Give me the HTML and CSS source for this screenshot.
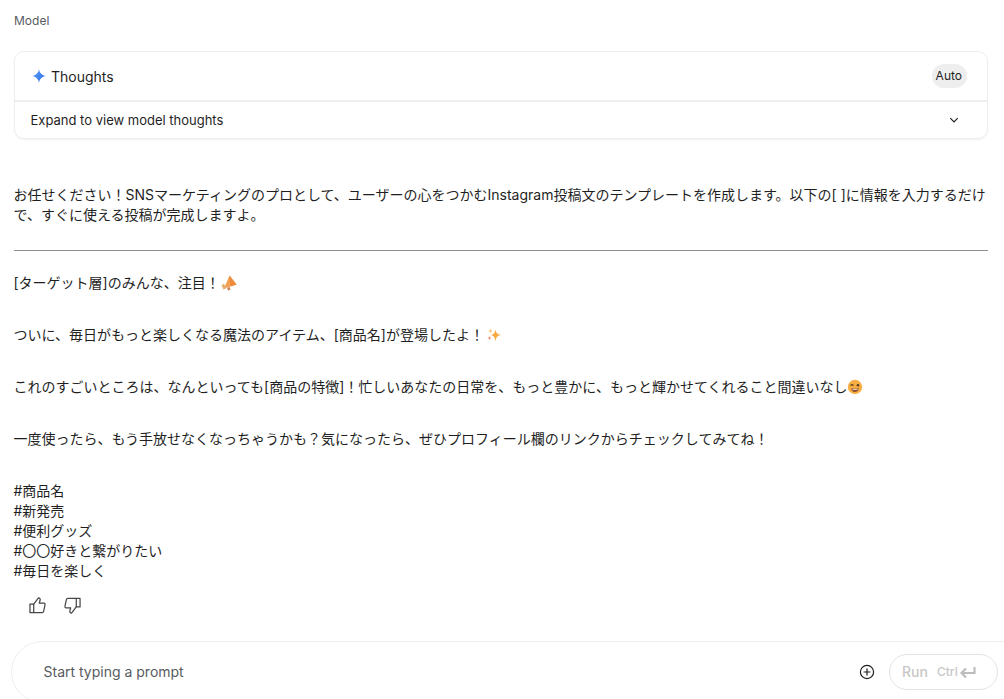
FILE: index.html
```html
<!DOCTYPE html>
<html lang="en">
<head>
  <meta charset="UTF-8" />
  <meta name="viewport" content="width=device-width, initial-scale=1" />
  <title>Model response</title>
  <link rel="stylesheet" href="styles.css">
</head>
<body>

  <div class="chat">
    <div class="role">Model</div>

    <div class="thoughts">
      <div class="thoughts-head">
        <div class="thoughts-title">
          <svg class="spark" width="16" height="16" viewBox="0 0 16 16">
            <defs>
              <linearGradient id="sparkFill" x1="0" y1="0" x2="1" y2="1">
                <stop offset="0" stop-color="#5b9bfa" />
                <stop offset="1" stop-color="#2f6fe8" />
              </linearGradient>
            </defs>
            <path d="M8 1C8.5 5 11 7.5 15 8C11 8.5 8.5 11 8 15C7.5 11 5 8.5 1 8C5 7.5 7.5 5 8 1Z" fill="url(#sparkFill)" />
          </svg>
          <span class="thoughts-label">Thoughts</span>
        </div>
        <span class="auto-chip">Auto</span>
      </div>
      <div class="thoughts-row">
        <span>Expand to view model thoughts</span>
        <svg width="12" height="12" viewBox="0 0 12 12" fill="none" stroke="#1f1f1f" stroke-width="1.2">
          <path d="M2.3 4.2L6 7.9L9.7 4.2" />
        </svg>
      </div>
    </div>

    <div class="message">
      <p>お任せください！SNSマーケティングのプロとして、ユーザーの心をつかむInstagram投稿文のテンプレートを作成します。以下の[ ]に情報を入力するだけで、すぐに使える投稿が完成しますよ。</p>
      <hr class="divider" />
      <p>[ターゲット層]のみんな、注目！<svg class="emoji emoji-horn" width="16" height="16" viewBox="0 0 16 16">
          <path d="M8.5 0.5L15.5 9.5L3 13.5Z" fill="#f0a050" />
          <path d="M8.5 0.5L15.5 9.5L9.5 11.5Z" fill="#ee8a3c" />
          <path d="M0.5 10.5L2.5 14.5L5 13.5L3 8.5Z" fill="#e2b070" />
          <path d="M6 12.8L8.8 12L9.5 14.8L7 15.5Z" fill="#c9875a" />
        </svg></p>
      <p>ついに、毎日がもっと楽しくなる魔法のアイテム、[商品名]が登場したよ！<svg class="emoji emoji-sparkle" width="16" height="16" viewBox="0 0 16 16">
          <path d="M9.5 2.5C10 6 11.5 7.5 15.5 8C11.5 8.5 10 10 9.5 14.5C9 10 7.5 8.5 4.5 8C7.5 7.5 9 6 9.5 2.5Z" fill="#f9a83c" />
          <path d="M4.5 1C4.7 3 5.3 3.6 7 4C5.3 4.4 4.7 5 4.5 6.8C4.3 5 3.7 4.4 2 4C3.7 3.6 4.3 3 4.5 1Z" fill="#fcc77a" />
          <path d="M3.5 8.5C3.7 10.3 4.3 10.8 6 11C4.3 11.3 3.7 11.8 3.5 13.6C3.3 11.8 2.7 11.3 1 11C2.7 10.8 3.3 10.3 3.5 8.5Z" fill="#f59a78" />
        </svg></p>
      <p>これのすごいところは、なんといっても[商品の特徴]！忙しいあなたの日常を、もっと豊かに、もっと輝かせてくれること間違いなし<svg class="emoji" width="16" height="16" viewBox="0 0 16 16">
          <circle cx="8" cy="8" r="7.2" fill="#f8ae42" />
          <path d="M3.5 6.5Q5 5 6.5 6.5" fill="none" stroke="#6b4a2b" stroke-width="1.2" />
          <circle cx="11" cy="6.3" r="1.3" fill="#5a3d24" />
          <path d="M4 9.3Q8 10.2 12 9.3Q11 13 8 13Q5 13 4 9.3Z" fill="#8a4b2a" />
          <path d="M5.2 9.8Q8 10.4 10.8 9.8L10.5 10.6Q8 11 5.5 10.6Z" fill="#fff" />
        </svg></p>
      <p>一度使ったら、もう手放せなくなっちゃうかも？気になったら、ぜひプロフィール欄のリンクからチェックしてみてね！</p>
      <p>#商品名<br>#新発売<br>#便利グッズ<br>#〇〇好きと繋がりたい<br>#毎日を楽しく</p>
    </div>

    <div class="feedback">
      <svg width="17" height="17" viewBox="0 0 18 18" fill="none" stroke="#444746" stroke-width="1.3" stroke-linejoin="round">
        <path d="M1 7.5H5V16.5H1Z" />
        <path d="M5 7.5L10 1C11.5 1 12.2 2 11.8 3.2L10.9 6.5H15.8C16.7 6.5 17.2 7.2 17 8L15.5 15.2C15.3 16 14.8 16.5 14 16.5H5" />
      </svg>
      <svg width="17" height="17" viewBox="0 0 18 18" fill="none" stroke="#444746" stroke-width="1.3" stroke-linejoin="round">
        <path d="M17 10.5H13V1.5H17Z" />
        <path d="M13 10.5L8 17C6.5 17 5.8 16 6.2 14.8L7.1 11.5H2.2C1.3 11.5 0.8 10.8 1 10L2.5 2.8C2.7 2 3.2 1.5 4 1.5H13" />
      </svg>
    </div>
  </div>

  <div class="prompt-box">
    <span class="placeholder">Start typing a prompt</span>
    <svg class="add-icon" width="16" height="16" viewBox="0 0 16 16" fill="none" stroke="#1f1f1f" stroke-width="1.2">
      <circle cx="8" cy="8" r="6.6" />
      <path d="M8 4.6V11.4M4.6 8H11.4" />
    </svg>
    <div class="run-btn">
      <span class="run-label">Run</span>
      <span class="run-keys">Ctrl</span>
      <svg width="17" height="14" viewBox="0 0 17 14" fill="none" stroke="#bdbdbd" stroke-width="2.2">
        <path d="M15.5 2V8H3M7 3.5L2.5 8L7 12.5" />
      </svg>
    </div>
  </div>

</body>
</html>
```

FILE: styles.css
```css
html, body {
  height: 100%;
}
body {
  margin: 0;
  background-color: #ffffff;
  color: #1f1f1f;
  font-family: Inter, "Noto Sans CJK JP", sans-serif;
  font-size: 14px;
  line-height: 20px;
  overflow: hidden;
  display: flex;
  flex-direction: column;
}
.chat {
  padding: 0 16px 0 14px;
  flex: 1;
}
.role {
  font-size: 12px;
  color: #575b5f;
  padding-top: 11px;
  height: 40px;
  box-sizing: border-box;
  margin-bottom: 11px;
}
.thoughts {
  border: 1px solid #eeeeee;
  border-radius: 10px;
  box-shadow: 0 1px 2px rgba(0, 0, 0, 0.06);
  height: 88px;
  box-sizing: border-box;
}
.thoughts-head {
  display: flex;
  align-items: center;
  justify-content: space-between;
  height: 50px;
  padding: 0 20px 0 16px;
  border-bottom: 2px solid #eeeeee;
  box-sizing: border-box;
}
.thoughts-title {
  display: flex;
  align-items: center;
  gap: 4px;
}
.thoughts-label {
  padding-top: 2px;
}
.auto-chip {
  font-size: 12px;
  background-color: #eeeeee;
  border-radius: 12px;
  padding: 2px 5px 2px 4px;
}
.thoughts-row {
  display: flex;
  align-items: center;
  justify-content: space-between;
  height: 36px;
  padding: 0 27px 0 15.5px;
  font-size: 13px;
}
.message {
  padding-top: 46px;
}
.message p {
  margin: 0 0 32px -0.5px;
}
.message p:last-child {
  margin-bottom: 0;
}
.divider {
  border: none;
  border-top: 1px solid #8e8e8e;
  margin: -7px 0 22px 0;
}
.emoji {
  vertical-align: -3px;
}
.emoji-horn {
  margin-left: 1px;
}
.emoji-sparkle {
  margin-left: 2px;
}
.feedback {
  display: flex;
  gap: 18px;
  padding: 16px 0 0 15px;
}
.prompt-box {
  flex: none;
  display: flex;
  align-items: center;
  height: 60px;
  margin: 0 -31px -4px 11px;
  padding: 0 36px 0 31.5px;
  border: 1px solid #eeeeee;
  border-radius: 32px;
  box-sizing: content-box;
}
.placeholder {
  flex: 1;
  color: #575b5f;
}
.add-icon {
  margin-right: 14px;
}
.run-btn {
  display: flex;
  align-items: center;
  width: 109px;
  height: 36px;
  padding-left: 12px;
  box-sizing: border-box;
  border: 1px solid #e3e3e3;
  border-radius: 18px;
  color: #c7c7c7;
  font-weight: 500;
}
.run-label {
  margin-right: 9px;
}
.run-keys {
  font-size: 12px;
  margin-right: 1px;
}
```
